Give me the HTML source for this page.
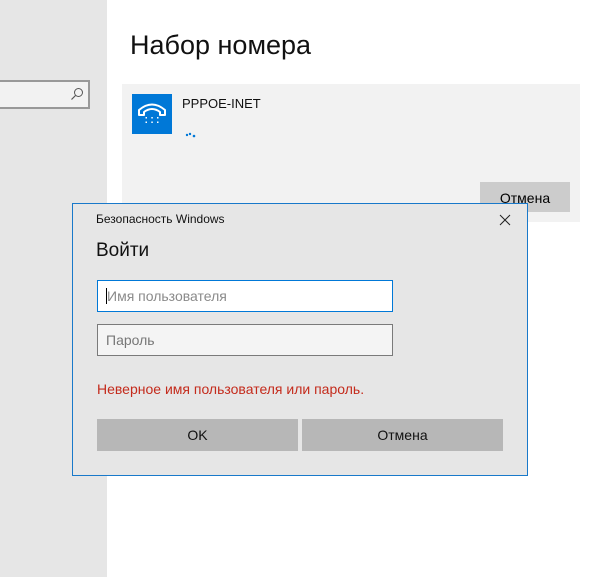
<!DOCTYPE html>
<html><head><meta charset="utf-8"><style>
*{margin:0;padding:0;box-sizing:border-box}
body{width:611px;height:577px;position:relative;overflow:hidden;background:#fff;font-family:"Liberation Sans","Noto Sans CJK SC",sans-serif;color:#000}
.a{position:absolute}
</style></head><body>
<div class="a" style="left:0;top:0;width:107px;height:577px;background:#e6e6e6"></div>
<div class="a" style="left:-2px;top:80px;width:92px;height:29px;border:2px solid #999;background:#f2f2f2"></div>
<svg class="a" style="left:70px;top:87px" width="14" height="14" viewBox="0 0 14 14"><circle cx="8.5" cy="5.5" r="4" fill="none" stroke="#555" stroke-width="1"/><line x1="5.5" y1="8.5" x2="1.5" y2="12.5" stroke="#555" stroke-width="1.2"/></svg>
<div class="a" style="left:130px;top:30px;font-size:27px;color:#111">Набор номера</div>
<div class="a" style="left:122px;top:84px;width:458px;height:138px;background:#f2f2f2"></div>
<div class="a" style="left:132px;top:94px;width:40px;height:40px;background:#0078d7"></div>
<svg class="a" style="left:132px;top:94px" width="40" height="40" viewBox="0 0 40 40"><path d="M7 21 L7 16 Q20 5 33 16 L33 21 L28 21 L28 18 Q20 12 12 18 L12 21 Z" fill="none" stroke="#fff" stroke-width="2" stroke-linejoin="round"/><g fill="#fff"><rect x="13.5" y="23" width="1.5" height="1.5"/><rect x="19.3" y="23" width="1.5" height="1.5"/><rect x="25" y="23" width="1.5" height="1.5"/><rect x="13.5" y="27.5" width="1.5" height="1.5"/><rect x="19.3" y="27.5" width="1.5" height="1.5"/><rect x="25" y="27.5" width="1.5" height="1.5"/></g></svg>
<div class="a" style="left:182px;top:96px;font-size:13px;color:#111">PPPOE-INET</div>
<svg class="a" style="left:185px;top:132px" width="20" height="8"><circle cx="2" cy="3" r="1.2" fill="#0078d7"/><circle cx="5" cy="2" r="1.2" fill="#0078d7"/><circle cx="9" cy="4" r="1.3" fill="#0078d7"/></svg>
<div class="a" style="left:480px;top:182px;width:90px;height:30px;background:#ccc;font-size:14px;text-align:center;line-height:32px">Отмена</div>

<div class="a" style="left:72px;top:203px;width:456px;height:273px;background:#e6e6e6;border:1px solid #1979ca"></div>
<div class="a" style="left:96px;top:212px;font-size:12px;color:#111">Безопасность Windows</div>
<svg class="a" style="left:498px;top:213px" width="14" height="14"><path d="M2 2L12 12M12 2L2 12" stroke="#222" stroke-width="1"/></svg>
<div class="a" style="left:96px;top:240px;font-size:19px;color:#111">Войти</div>
<div class="a" style="left:97px;top:280px;width:296px;height:32px;background:#fff;border:1px solid #0078d7"></div>
<div class="a" style="left:106px;top:288px;width:1px;height:16px;background:#000"></div>
<div class="a" style="left:107px;top:288px;font-size:14px;color:#8a8a8a">Имя пользователя</div>
<div class="a" style="left:97px;top:324px;width:296px;height:32px;background:#f4f4f4;border:1px solid #7a7a7a"></div>
<div class="a" style="left:106px;top:332px;font-size:14px;color:#777">Пароль</div>
<div class="a" style="left:97px;top:381px;font-size:14px;color:#c42b1c">Неверное имя пользователя или пароль.</div>
<div class="a" style="left:97px;top:419px;width:201px;height:32px;background:#b7b7b7;font-size:14px;text-align:center;line-height:32px;color:#111">OK</div>
<div class="a" style="left:302px;top:419px;width:201px;height:32px;background:#b7b7b7;font-size:14px;text-align:center;line-height:32px;color:#111">Отмена</div>
</body></html>
